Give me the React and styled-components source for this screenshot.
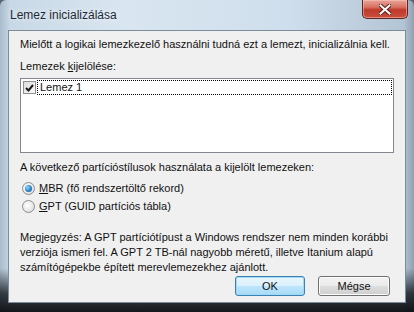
import React from "react";
import styled, { createGlobalStyle } from "styled-components";

const GlobalStyle = createGlobalStyle`
  html, body {
    margin: 0;
    padding: 0;
    background: #5a6470;
  }
  body {
    font-family: "Liberation Sans", Arial, sans-serif;
  }
`;

const Window = styled.div`
  width: 414px;
  height: 312px;
  box-sizing: border-box;
  display: flex;
  flex-direction: column;
  border-radius: 6px 6px 0 0;
  background:
    linear-gradient(180deg, rgba(255,255,255,0) 0%, rgba(255,255,255,0) 86%, rgba(20,24,30,0.8) 94%, rgba(10,12,16,0.95) 100%),
    linear-gradient(90deg, #a9bbcc 0%, #c8d8e6 2.5%, #d9e6f1 30%, #cfdeec 70%, #b3c4d4 97.5%, #8fa1b2 100%);
  overflow: hidden;
`;

const TitleBar = styled.div`
  height: 30px;
  flex: 0 0 30px;
  display: flex;
  align-items: flex-start;
  justify-content: space-between;
  padding-left: 10px;
  padding-right: 6px;
`;

const Title = styled.span`
  font-family: "Liberation Sans", Arial, sans-serif;
  font-size: 12px;
  color: #1e2a36;
  margin-top: 8px;
  text-shadow: 0 0 6px rgba(255,255,255,0.9);
`;

const CloseButton = styled.div`
  width: 46px;
  height: 19px;
  box-sizing: border-box;
  border: 1px solid #5c2626;
  border-top: none;
  border-radius: 0 0 5px 5px;
  background: linear-gradient(180deg, #e8a59a 0%, #d7705f 40%, #c0392b 55%, #c8503c 100%);
  box-shadow: inset 0 0 0 1px rgba(255,200,190,0.5);
  display: flex;
  align-items: center;
  justify-content: center;
`;

const Client = styled.div`
  flex: 1;
  margin: 0 8px 9px 8px;
  border: 1px solid #7d8c9b;
  background: #f0f0f0;
  padding: 6px 11px 0 11px;
  color: #111;
  font-size: 11px;
  display: flex;
  flex-direction: column;
`;

const Line = styled.div`
  line-height: ${(p) => p.$lh || 14}px;
  margin-top: ${(p) => p.$top || 0}px;
  white-space: nowrap;
`;

const U = styled.span`
  text-decoration: underline;
`;

const ListBox = styled.div`
  margin-top: 5px;
  height: 71px;
  border: 1px solid #828790;
  background: #fff;
  padding: 1px;
`;

const ListItem = styled.div`
  display: flex;
  align-items: center;
  height: 15px;
`;

const CheckBox = styled.div`
  width: 13px;
  height: 13px;
  box-sizing: border-box;
  border: 1px solid #8e8f8f;
  background: linear-gradient(135deg, #dcdcdc 0%, #fafafa 100%);
  display: flex;
  align-items: center;
  justify-content: center;
  margin-left: 1px;
`;

const ItemLabel = styled.span`
  flex: 1;
  margin-left: 1px;
  padding-left: 2px;
  height: 15px;
  box-sizing: border-box;
  border: 1px dotted #000;
  line-height: 13px;
`;

const RadioRow = styled.div`
  display: flex;
  align-items: center;
  height: 18px;
  margin-left: 2px;
  margin-top: ${(p) => p.$top || 0}px;
`;

const Radio = styled.div`
  width: 13px;
  height: 13px;
  box-sizing: border-box;
  border-radius: 50%;
  border: 1px solid #8e8f8f;
  background: radial-gradient(circle at 40% 40%, #ffffff 0%, #e6e6e6 60%, #cfcfcf 100%);
  display: flex;
  align-items: center;
  justify-content: center;
  margin-right: 4px;
`;

const RadioDot = styled.div`
  width: 7px;
  height: 7px;
  border-radius: 50%;
  background: radial-gradient(circle at 35% 35%, #9ad3f7 0%, #2a86c8 55%, #0f4f8a 100%);
`;

const ButtonRow = styled.div`
  display: flex;
  justify-content: flex-end;
  gap: 13px;
  margin-top: 1px;
  padding-right: 4px;
`;

const Button = styled.div`
  width: ${(p) => p.$w}px;
  height: 20px;
  box-sizing: border-box;
  border-radius: 3px;
  display: flex;
  align-items: center;
  justify-content: center;
  font-size: 11px;
  border: 1px solid ${(p) => (p.$default ? "#3c7fb1" : "#707070")};
  background: ${(p) =>
    p.$default
      ? "linear-gradient(180deg, #eaf6fd 0%, #d9f0fc 50%, #bee6fd 51%, #a7d9f5 100%)"
      : "linear-gradient(180deg, #f2f2f2 0%, #ebebeb 50%, #dddddd 51%, #cfcfcf 100%)"};
  box-shadow: inset 0 0 0 1px ${(p) => (p.$default ? "#9ddcf8" : "#fcfcfc")};
`;

const App = () => {
  return (
    <>
      <GlobalStyle />
      <Window>
        <TitleBar>
          <Title>Lemez inicializálása</Title>
          <CloseButton>
            <svg width="12" height="11" viewBox="0 0 12 11">
              <path
                d="M1.5 1.5 L10.5 9.5 M10.5 1.5 L1.5 9.5"
                stroke="#5a1f1a"
                strokeWidth="4"
                strokeLinecap="square"
              />
              <path
                d="M1.5 1.5 L10.5 9.5 M10.5 1.5 L1.5 9.5"
                stroke="#fff"
                strokeWidth="2"
                strokeLinecap="square"
              />
            </svg>
          </CloseButton>
        </TitleBar>
        <Client>
          <Line>
            Mielőtt a logikai lemezkezelő használni tudná ezt a lemezt, inicializálnia kell.
          </Line>
          <Line $top={8}>
            Lemezek <U>k</U>ijelölése:
          </Line>
          <ListBox>
            <ListItem>
              <CheckBox>
                <svg width="9" height="8" viewBox="0 0 9 8">
                  <path d="M1 4 L3.5 6.5 L8 1" stroke="#1a1a1a" strokeWidth="2" fill="none" />
                </svg>
              </CheckBox>
              <ItemLabel>Lemez 1</ItemLabel>
            </ListItem>
          </ListBox>
          <Line $top={7}>
            A következő partícióstílusok használata a kijelölt lemezeken:
          </Line>
          <RadioRow $top={5}>
            <Radio>
              <RadioDot />
            </Radio>
            <span>
              <U>M</U>BR (fő rendszertöltő rekord)
            </span>
          </RadioRow>
          <RadioRow>
            <Radio />
            <span>
              <U>G</U>PT (GUID partíciós tábla)
            </span>
          </RadioRow>
          <Line $top={15} $lh={15}>
            Megjegyzés: A GPT partíciótípust a Windows rendszer nem minden korábbi
          </Line>
          <Line $lh={15}>
            verziója ismeri fel. A GPT 2 TB-nál nagyobb méretű, illetve Itanium alapú
          </Line>
          <Line $lh={15}>számítógépekbe épített merevlemezekhez ajánlott.</Line>
          <ButtonRow>
            <Button $w={70} $default>
              OK
            </Button>
            <Button $w={72}>Mégse</Button>
          </ButtonRow>
        </Client>
      </Window>
    </>
  );
};

export default App;
